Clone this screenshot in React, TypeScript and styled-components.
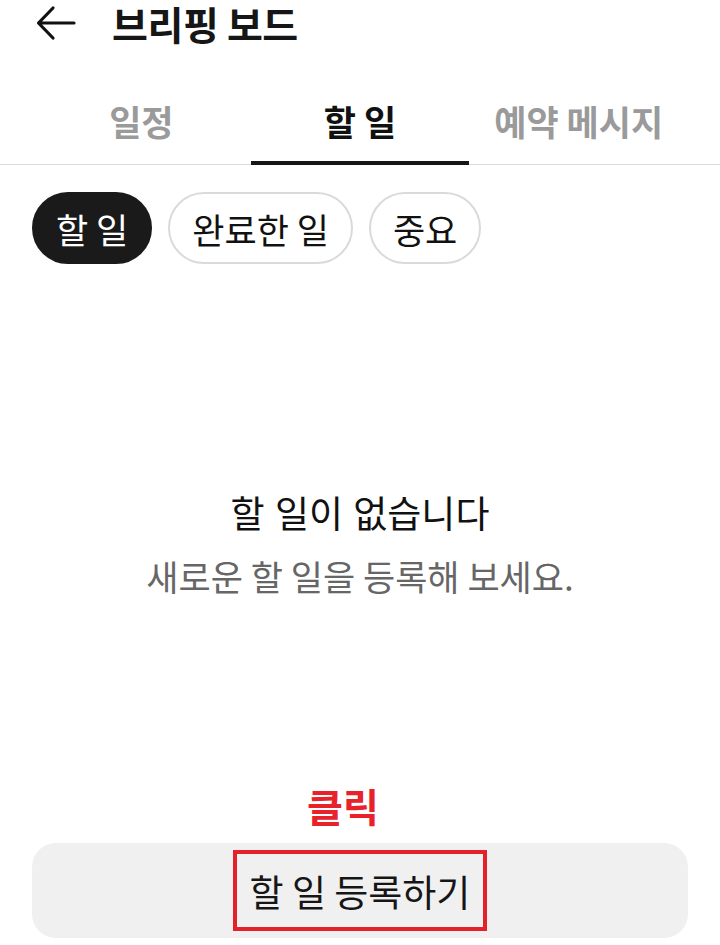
import React from "react";
import styled, { createGlobalStyle } from "styled-components";

const Global = createGlobalStyle`
  html, body { margin: 0; padding: 0; background: #ffffff; }
  body { font-family: "Noto Sans CJK KR", "Noto Sans", sans-serif; color: #111; }
  * { box-sizing: border-box; }
`;

const Page = styled.div`
  width: 720px;
  height: 945px;
  display: flex;
  flex-direction: column;
  overflow: hidden;
`;

const Header = styled.header`
  height: 46px;
  display: flex;
  align-items: center;
  padding-left: 34px;
  gap: 34px;
`;

const BackButton = styled.button`
  width: 44px;
  height: 44px;
  border: 0;
  background: none;
  padding: 0;
  display: flex;
  align-items: center;
  justify-content: center;
  color: #111;
`;

const Title = styled.h1`
  margin: 0;
  font-size: 39px;
  font-weight: 700;
  line-height: 46px;
  letter-spacing: -0.4px;
  color: #161616;
  white-space: nowrap;
`;

const TabBar = styled.nav`
  margin-top: 41px;
  border-bottom: 1px solid #dcdcdc;
  padding: 0 32px;
  display: grid;
  grid-template-columns: repeat(3, 1fr);
`;

const Tab = styled.div<{ $active?: boolean }>`
  height: 78px;
  display: flex;
  align-items: center;
  justify-content: center;
  font-size: 35px;
  font-weight: 700;
  color: ${(p) => (p.$active ? "#111" : "#9a9a9a")};
  border-bottom: 4px solid ${(p) => (p.$active ? "#161616" : "transparent")};
  margin-bottom: -1px;
  padding-bottom: 7px;
  white-space: nowrap;
`;

const ChipRow = styled.div`
  margin-top: 27px;
  padding: 0 32px;
  display: flex;
  gap: 16px;
`;

const Chip = styled.div<{ $active?: boolean }>`
  height: 72px;
  padding: 0 22px;
  border-radius: 36px;
  display: flex;
  align-items: center;
  font-size: 35px;
  font-weight: 400;
  background: ${(p) => (p.$active ? "#1a1a1a" : "#fff")};
  color: ${(p) => (p.$active ? "#fff" : "#111")};
  border: 2px solid ${(p) => (p.$active ? "#1a1a1a" : "#dadada")};
  white-space: nowrap;
`;

const Empty = styled.div`
  margin-top: 226px;
  display: flex;
  flex-direction: column;
  align-items: center;
  gap: 20px;
`;

const EmptyTitle = styled.div`
  font-size: 37px;
  line-height: 44px;
  color: #111;
  word-spacing: 2px;
`;

const EmptyText = styled.div`
  font-size: 35px;
  line-height: 44px;
  color: #666;
`;

const Spacer = styled.div`
  flex: 1;
`;

const ClickLabel = styled.div`
  align-self: center;
  margin-left: -34px;
  font-size: 39px;
  font-weight: 700;
  line-height: 44px;
  color: #e8212b;
`;

const BottomButton = styled.button`
  margin: 16px 32px 7px;
  height: 95px;
  border: 0;
  border-radius: 24px;
  background: #f0f0f0;
  display: flex;
  align-items: center;
  justify-content: center;
  padding: 0;
  font-family: inherit;
`;

const Highlight = styled.span`
  display: flex;
  align-items: center;
  justify-content: center;
  width: 254px;
  height: 81px;
  border: 4px solid #e3212b;
  font-size: 37px;
  color: #161616;
  white-space: nowrap;
`;

const BackIcon = () => (
  <svg width="40" height="36" viewBox="0 0 40 36" fill="none">
    <path
      d="M38 18H3M17 3L2.5 18L17 33"
      stroke="#111"
      strokeWidth="3.2"
      strokeLinecap="round"
      strokeLinejoin="round"
    />
  </svg>
);

export default function App() {
  return (
    <Page>
      <Global />
      <Header>
        <BackButton aria-label="뒤로">
          <BackIcon />
        </BackButton>
        <Title>브리핑 보드</Title>
      </Header>
      <TabBar>
        <Tab>일정</Tab>
        <Tab $active>할 일</Tab>
        <Tab>예약 메시지</Tab>
      </TabBar>
      <ChipRow>
        <Chip $active>할 일</Chip>
        <Chip>완료한 일</Chip>
        <Chip>중요</Chip>
      </ChipRow>
      <Empty>
        <EmptyTitle>할 일이 없습니다</EmptyTitle>
        <EmptyText>새로운 할 일을 등록해 보세요.</EmptyText>
      </Empty>
      <Spacer />
      <ClickLabel>클릭</ClickLabel>
      <BottomButton>
        <Highlight>할 일 등록하기</Highlight>
      </BottomButton>
    </Page>
  );
}
